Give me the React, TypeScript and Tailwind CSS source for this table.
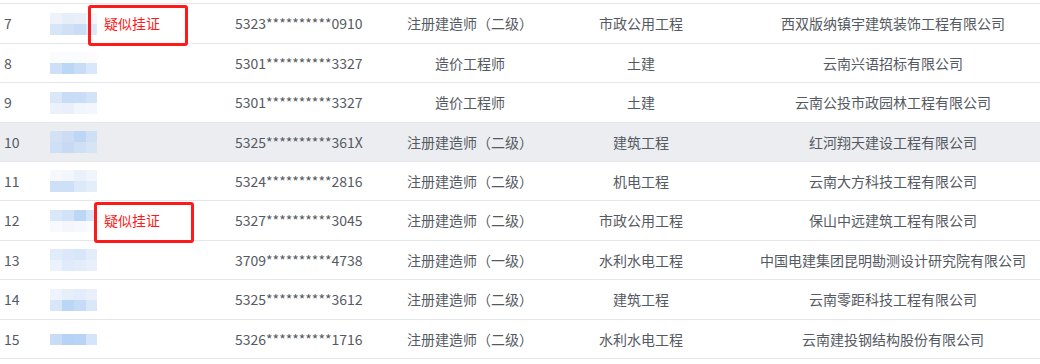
import React from 'react';

interface Row {
  no: number;
  tag?: boolean;
  id: string;
  title: string;
  major: string;
  company: string;
  h: 'tall' | 'short';
  hover?: boolean;
  pixels: string[][];
}

const rows: Row[] = [
  { no: 7, tag: true, id: '5323**********0910', title: '注册建造师（二级）', major: '市政公用工程', company: '西双版纳镇宇建筑装饰工程有限公司', h: 'tall',
    pixels: [['#eef3fb', '#e6eefa', '#e8effa', '#f4f7fc'], ['#d6e5f8', '#cfe0f7', '#c9ddf6', '#dce9f9']] },
  { no: 8, id: '5301**********3327', title: '造价工程师', major: '土建', company: '云南兴语招标有限公司', h: 'short',
    pixels: [['#fafbfd', '#fafbfd', '#fafbfd', '#fcfcfe'], ['#cde0f7', '#bcd6f6', '#c8dcf6', '#d8e7f9']] },
  { no: 9, id: '5301**********3327', title: '造价工程师', major: '土建', company: '云南公投市政园林工程有限公司', h: 'tall',
    pixels: [['#d9e7f9', '#c8dcf7', '#c9ddf7', '#d2e3f8'], ['#eaf1fb', '#e9f0fb', '#f1f5fc', '#f3f7fd']] },
  { no: 10, id: '5325**********361X', title: '注册建造师（二级）', major: '建筑工程', company: '红河翔天建设工程有限公司', h: 'short', hover: true,
    pixels: [['#d3e1f5', '#cbdcf4', '#bed5f4', '#cfdff5'], ['#cfdff5', '#c7d9f3', '#cfdff5', '#d6e4f6']] },
  { no: 11, id: '5324**********2816', title: '注册建造师（二级）', major: '机电工程', company: '云南大方科技工程有限公司', h: 'short',
    pixels: [['#f6f8fc', '#f3f6fc', '#eaf1fb', '#f0f5fc'], ['#cde0f8', '#cde0f8', '#dde9f9', '#e4eefa']] },
  { no: 12, tag: true, id: '5327**********3045', title: '注册建造师（二级）', major: '市政公用工程', company: '保山中远建筑工程有限公司', h: 'tall',
    pixels: [['#d9e7f9', '#d2e3f8', '#bcd6f6', '#d5e4f8'], ['#f6f9fd', '#f3f7fd', '#f5f8fd', '#fafbfe']] },
  { no: 13, id: '3709**********4738', title: '注册建造师（一级）', major: '水利水电工程', company: '中国电建集团昆明勘测设计研究院有限公司', h: 'short',
    pixels: [['#e1ecfa', '#dce8f9', '#d7e6f9', '#e3edfa'], ['#ecf2fc', '#dfeafa', '#e3edfa', '#e9f0fb']] },
  { no: 14, id: '5325**********3612', title: '注册建造师（二级）', major: '建筑工程', company: '云南零距科技工程有限公司', h: 'tall',
    pixels: [['#eef3fc', '#e6eefa', '#e2ecfa', '#e9f0fb'], ['#d8e6f9', '#bcd6f6', '#c5dbf7', '#d9e7f9']] },
  { no: 15, id: '5326**********1716', title: '注册建造师（二级）', major: '水利水电工程', company: '云南建投钢结构股份有限公司', h: 'short',
    pixels: [['#c9dcf7', '#b6d2f6', '#b8d3f6', '#d4e5f9']] },
];

function Blur({ pixels }: { pixels: string[][] }) {
  return (
    <div className="flex flex-col">
      {pixels.map((line, i) => (
        <div key={i} className="flex">
          {line.map((c, j) => (
            <div key={j} className={j === 3 ? 'w-[11px] h-[11px]' : 'w-[12px] h-[11px]'} style={{ backgroundColor: c }} />
          ))}
        </div>
      ))}
    </div>
  );
}

export default function App() {
  return (
    <div
      className="relative w-[1040px] h-[364px] overflow-hidden bg-white text-[14px] text-[#555a62]"
      style={{ fontFamily: '"Noto Sans CJK SC", "Noto Sans", sans-serif' }}
    >
      <div className="h-[4px] border-b border-[#e4e6ea]" />
      {rows.map(r => (
        <div
          key={r.no}
          className={`flex items-center border-b border-[#e4e6ea] ${r.h === 'tall' ? 'h-[40px]' : 'h-[39px]'} ${r.hover ? 'bg-[#ebedf1]' : 'bg-white'}`}
        >
          <div className="w-[40px] shrink-0 pl-[4px]">{r.no}</div>
          <div className="w-[64px] shrink-0 pl-[10px]">
            <Blur pixels={r.pixels} />
          </div>
          <div className="w-[131px] shrink-0 text-[#ff1a1a]">{r.tag ? '疑似挂证' : ''}</div>
          <div className="w-[165px] shrink-0 whitespace-nowrap">{r.id}</div>
          <div className="w-[140px] shrink-0 text-center whitespace-nowrap">{r.title}</div>
          <div className="w-[202px] shrink-0 text-center whitespace-nowrap">{r.major}</div>
          <div className="w-[302px] shrink-0 text-center whitespace-nowrap">{r.company}</div>
        </div>
      ))}

      {/* annotation boxes */}
      <div className="absolute left-[88px] top-[5px] w-[100px] h-[41px] border-[3px] border-[#ff1a1a] rounded-[3px]" />
      <div className="absolute left-[94px] top-[202px] w-[100px] h-[41px] border-[3px] border-[#ff1a1a] rounded-[3px]" />
    </div>
  );
}
